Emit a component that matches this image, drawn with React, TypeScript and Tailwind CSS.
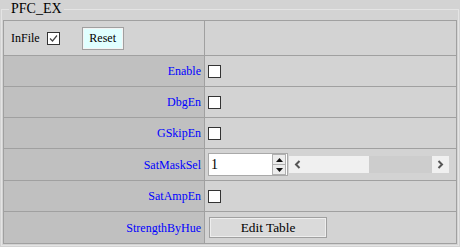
import React from "react";

const labels = ["Enable", "DbgEn", "GSkipEn"];

function Box({ checked = false }: { checked?: boolean }) {
  return (
    <span className="flex h-[13px] w-[13px] items-center justify-center border border-[#333] bg-white">
      {checked && (
        <svg width="9" height="9" viewBox="0 0 9 9">
          <path d="M1 4.5 L3.5 7 L8 1.5" fill="none" stroke="#444" strokeWidth="1.2" />
        </svg>
      )}
    </span>
  );
}

function Row({ label, h, children }: { label: string; h: string; children: React.ReactNode }) {
  return (
    <>
      <div className={`flex items-center justify-end border-r border-b border-[#a0a0a0] bg-[#c0c0c0] pr-[3px] text-[12px] text-[#0000ff] ${h}`}>
        {label}
      </div>
      <div className={`flex items-center border-r border-b border-[#a0a0a0] bg-[#d3d3d3] pl-[3px] ${h}`}>{children}</div>
    </>
  );
}

export default function App() {
  return (
    <div className="h-[247px] w-[460px] bg-[#d3d3d3] font-['Liberation_Serif',serif] text-black">
      <fieldset className="mx-[1px] border border-[#e4e4e4] px-[1px] pb-[1px]">
        <legend className="ml-[6px] px-[2px] text-[14px] leading-[18px]">PFC_EX</legend>
        <div className="mt-[2px] grid grid-cols-[201px_1fr] border-t border-l border-[#a0a0a0]">
          <div className="flex h-[35px] items-center border-r border-b border-[#a0a0a0] pl-[7px] text-[12px]">
            <span>InFile</span>
            <span className="ml-[7px]">
              <Box checked />
            </span>
            <button className="ml-[22px] h-[23px] w-[42px] border border-[#a0a0a0] bg-[#e0ffff] text-[12px] shadow-[inset_0_0_0_1px_#f4f4f4]">
              Reset
            </button>
          </div>
          <div className="h-[35px] border-r border-b border-[#a0a0a0]" />

          {labels.map((l) => (
            <Row key={l} label={l} h="h-[31px]">
              <Box />
            </Row>
          ))}

          <Row label="SatMaskSel" h="h-[32px]">
            <div className="flex h-[23px] w-[80px] items-center border border-[#a9a9a9] bg-white pr-[1px]">
              <span className="flex-1 pl-[2px] text-[14px] leading-none">1</span>
              <div className="flex h-[21px] w-[14px] flex-col border border-[#b0b0b0]">
                <span className="flex flex-1 items-center justify-center border-b border-[#b0b0b0] bg-[#ececec]">
                  <svg width="7" height="4" viewBox="0 0 7 4"><path d="M3.5 0 L7 4 L0 4Z" fill="#111" /></svg>
                </span>
                <span className="flex flex-1 items-center justify-center bg-[#ececec]">
                  <svg width="7" height="4" viewBox="0 0 7 4"><path d="M0 0 L7 0 L3.5 4Z" fill="#111" /></svg>
                </span>
              </div>
            </div>
            <div className="ml-[1px] flex h-[17px] w-[160px] items-center bg-[#f0f0f0]">
              <span className="flex w-[17px] justify-center">
                <svg width="7" height="9" viewBox="0 0 7 9"><path d="M5.5 1 L2 4.5 L5.5 8" fill="none" stroke="#555" strokeWidth="2" /></svg>
              </span>
              <span className="w-[63px]" />
              <span className="h-[17px] w-[63px] bg-[#cdcdcd]" />
              <span className="flex flex-1 justify-center">
                <svg width="7" height="9" viewBox="0 0 7 9"><path d="M1.5 1 L5 4.5 L1.5 8" fill="none" stroke="#555" strokeWidth="2" /></svg>
              </span>
            </div>
          </Row>

          <Row label="SatAmpEn" h="h-[31px]">
            <Box />
          </Row>

          <Row label="StrengthByHue" h="h-[32px]">
            <button className="ml-[1px] h-[21px] w-[118px] border border-[#a0a0a0] bg-[#dadada] text-[13.33px] leading-none shadow-[inset_0_0_0_1px_#eeeeee]">
              Edit Table
            </button>
          </Row>
        </div>
      </fieldset>
    </div>
  );
}
